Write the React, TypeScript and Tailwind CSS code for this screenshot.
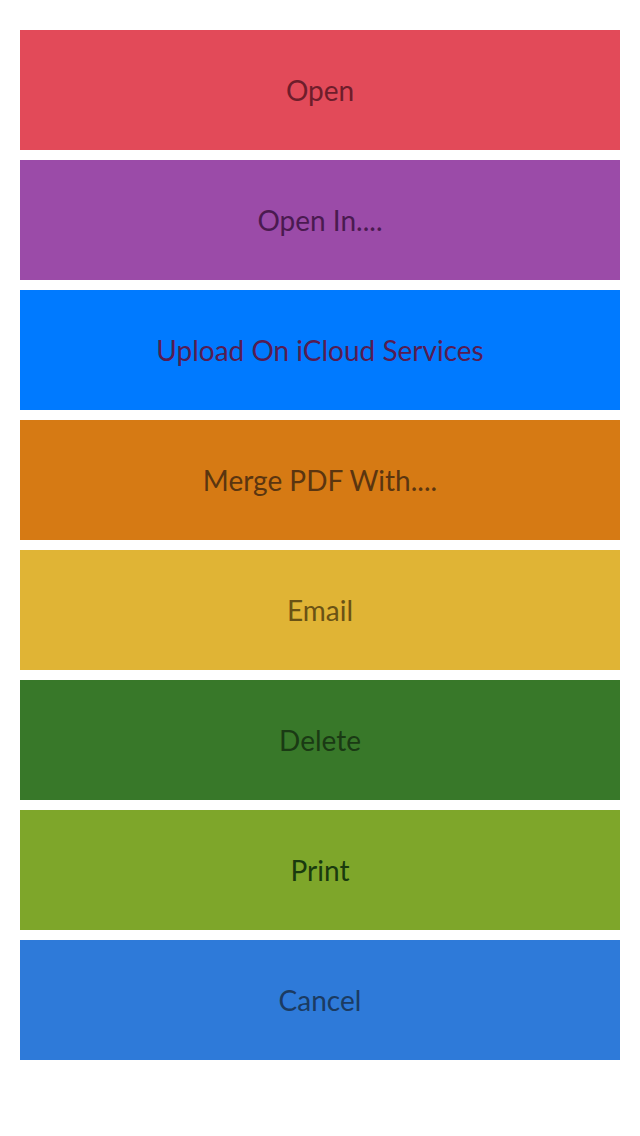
const actions = [
  { label: 'Open', bg: 'bg-[#e24a59]', fg: 'text-[#6e1d2b]' },
  { label: 'Open In....', bg: 'bg-[#9b4ba8]', fg: 'text-[#4a1a50]' },
  { label: 'Upload On iCloud Services', bg: 'bg-[#007aff]', fg: 'text-[#561c52]' },
  { label: 'Merge PDF With....', bg: 'bg-[#d67a14]', fg: 'text-[#5a3510]' },
  { label: 'Email', bg: 'bg-[#e0b435]', fg: 'text-[#6a5214]' },
  { label: 'Delete', bg: 'bg-[#387829]', fg: 'text-[#1a3a14]' },
  { label: 'Print', bg: 'bg-[#7ea62a]', fg: 'text-[#1a3a0e]' },
  { label: 'Cancel', bg: 'bg-[#2e7ad9]', fg: 'text-[#1b3b62]' },
]

export default function App() {
  return (
    <div className="min-h-[1136px] w-[640px] bg-white px-5 pt-[30px] font-['Lato','Open_Sans',sans-serif]">
      <div className="flex flex-col gap-[10px]">
        {actions.map((a) => (
          <button
            key={a.label}
            className={`flex h-[120px] w-full items-center justify-center text-[28px] ${a.bg} ${a.fg}`}
          >
            {a.label}
          </button>
        ))}
      </div>
    </div>
  )
}
